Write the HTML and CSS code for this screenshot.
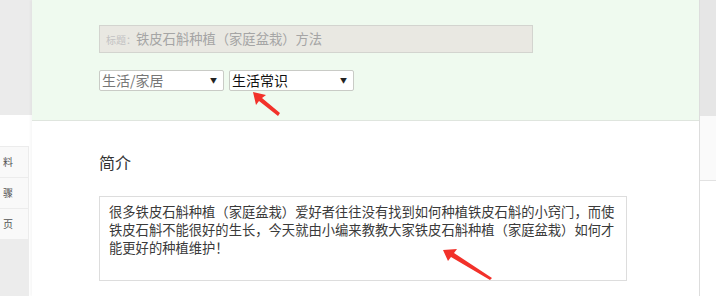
FILE: index.html
```html
<!DOCTYPE html>
<html lang="zh-CN">
<head>
    <meta charset="UTF-8" />
    <title>发布文章</title>
    <link rel="stylesheet" href="styles.css">
</head>
<body>
    <div class="page">
        <div class="side-left">
            <div class="side-top"></div>
            <ul class="side-menu">
                <li>料</li>
                <li>骤</li>
                <li>页</li>
            </ul>
            <div class="side-bottom"></div>
        </div>

        <div class="main">
            <div class="head-panel">
                <div class="title-input"><span class="title-label">标题：</span>铁皮石斛种植（家庭盆栽）方法</div>
                <div class="selects">
                    <div class="fake-select muted">生活/家居<span class="caret">▼</span></div>
                    <div class="fake-select">生活常识<span class="caret">▼</span></div>
                </div>
            </div>
            <div class="body-panel">
                <h2 class="section-title">简介</h2>
                <div class="intro-box">很多铁皮石斛种植（家庭盆栽）爱好者往往没有找到如何种植铁皮石斛的小窍门，而使铁皮石斛不能很好的生长，今天就由小编来教教大家铁皮石斛种植（家庭盆栽）如何才能更好的种植维护！</div>
            </div>
        </div>

        <div class="side-right">
            <div class="side-top"></div>
            <div class="right-box"></div>
        </div>

        <!-- red annotation arrows -->
        <svg class="arrow arrow-one" width="40" height="32" viewBox="0 0 40 32">
            <polygon points="1,1 14,4 10,7 28,22 26,25 7,10 4,14" fill="#f2312a" />
        </svg>
        <svg class="arrow arrow-two" width="60" height="40" viewBox="0 0 60 40">
            <polygon points="1,1 15,0 12,4 50,29 48,31 9,8 6,12" fill="#f2312a" />
        </svg>
    </div>
</body>
</html>
```

FILE: styles.css
```css
body {
    margin: 0;
    background-color: #fff;
    font-family: "Noto Sans CJK SC", "Noto Sans", sans-serif;
    color: #333;
}
.page {
    position: relative;
    display: flex;
    width: 716px;
    height: 296px;
    overflow: hidden;
}
.side-left {
    width: 32px;
    display: flex;
    flex-direction: column;
}
.side-top {
    height: 115px;
    background-color: #ebebeb;
}
.side-left .side-top {
    margin-bottom: 31px;
}
.side-menu {
    list-style: none;
    margin: 0;
    padding: 0;
    width: 29px;
    border-right: 1px solid #ececec;
    box-sizing: border-box;
}
.side-menu li {
    height: 30px;
    line-height: 30px;
    font-size: 10px;
    color: #555;
    padding-left: 3px;
    background-color: #f9f9f9;
    border-top: 1px solid #ececec;
}
.side-bottom {
    width: 29px;
    flex: 1;
    background-color: #ececec;
}
.main {
    width: 668px;
    border-right: 1px solid #ddd;
    box-shadow: -2px 0 2px rgba(0,0,0,0.03);
    box-sizing: border-box;
}
.head-panel {
    height: 121px;
    background-color: #effaef;
    border-bottom: 1px solid #dfe5de;
    box-sizing: border-box;
    padding: 25px 0 0 67px;
}
.title-input {
    width: 434px;
    height: 28px;
    line-height: 26px;
    box-sizing: border-box;
    border: 1px solid #d3d4cf;
    background-color: #e9e8e2;
    padding-left: 6px;
    font-size: 13.3px;
    color: #a5a5a5;
}
.title-label {
    font-size: 10px;
    color: #c2c2c2;
}
.selects {
    display: flex;
    gap: 5px;
    margin-top: 17px;
}
.fake-select {
    position: relative;
    width: 125px;
    height: 21px;
    line-height: 19px;
    box-sizing: border-box;
    border: 1px solid #c9cbc6;
    border-radius: 2px;
    background-color: #fff;
    padding-left: 2px;
    font-size: 14px;
    color: #111;
}
.fake-select.muted {
    color: #777;
}
.caret {
    position: absolute;
    right: 6px;
    top: 0;
    font-size: 7px;
    color: #222;
}
.body-panel {
    padding: 30px 0 0 67px;
}
.section-title {
    margin: 0;
    font-size: 16px;
    font-weight: normal;
    line-height: 22px;
    color: #333;
}
.intro-box {
    margin-top: 23px;
    width: 528px;
    height: 85px;
    box-sizing: border-box;
    border: 1px solid #ddd;
    padding: 6px 8px 0 9px;
    font-size: 13.3px;
    line-height: 18px;
    color: #3a3a3a;
}
.side-right {
    width: 16px;
}
.side-right .side-top {
    height: 116px;
    background-color: #e6e6e6;
}
.right-box {
    height: 64px;
    border-bottom: 1px solid #e2e2e2;
    background-color: #fafafa;
}
.arrow {
    position: absolute;
}
.arrow-one {
    left: 252px;
    top: 91px;
}
.arrow-two {
    left: 442px;
    top: 249px;
}
```
